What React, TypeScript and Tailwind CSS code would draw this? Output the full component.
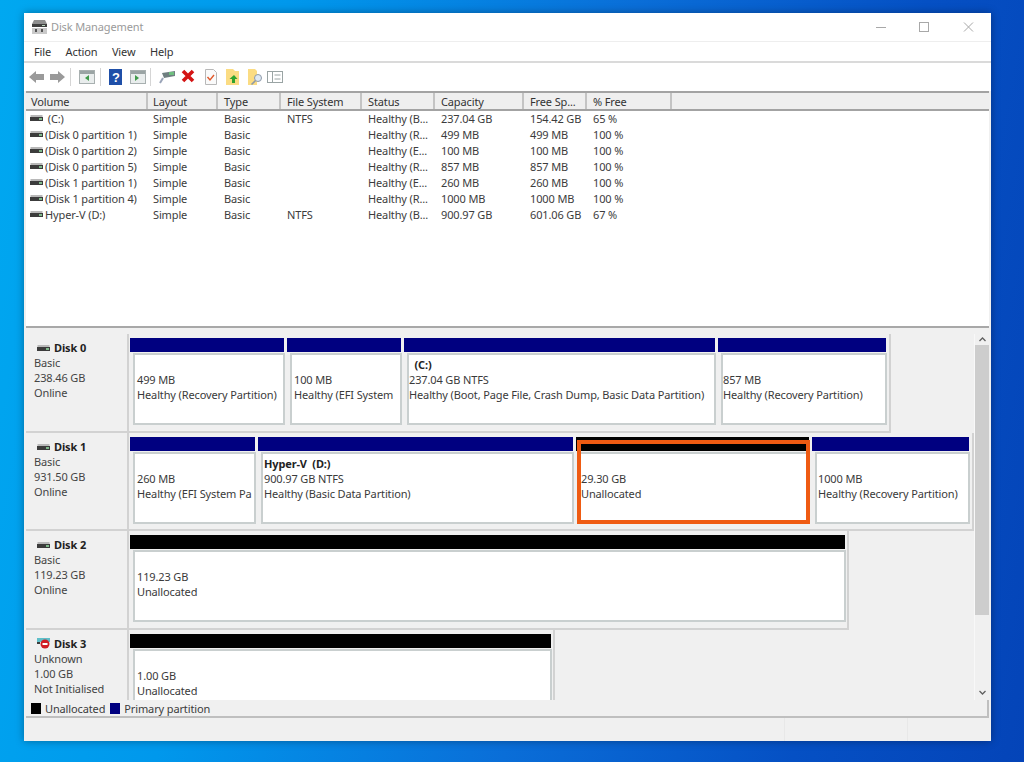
import React from "react";

const cols = ["w-[122px]", "w-[70px]", "w-[63px]", "w-[81px]", "w-[73px]", "w-[89px]", "w-[63px]", "w-[85px]"];
const heads = ["Volume", "Layout", "Type", "File System", "Status", "Capacity", "Free Sp...", "% Free"];
const rows = [
  [" (C:)", "Simple", "Basic", "NTFS", "Healthy (B...", "237.04 GB", "154.42 GB", "65 %"],
  ["(Disk 0 partition 1)", "Simple", "Basic", "", "Healthy (R...", "499 MB", "499 MB", "100 %"],
  ["(Disk 0 partition 2)", "Simple", "Basic", "", "Healthy (E...", "100 MB", "100 MB", "100 %"],
  ["(Disk 0 partition 5)", "Simple", "Basic", "", "Healthy (R...", "857 MB", "857 MB", "100 %"],
  ["(Disk 1 partition 1)", "Simple", "Basic", "", "Healthy (E...", "260 MB", "260 MB", "100 %"],
  ["(Disk 1 partition 4)", "Simple", "Basic", "", "Healthy (R...", "1000 MB", "1000 MB", "100 %"],
  ["Hyper-V (D:)", "Simple", "Basic", "NTFS", "Healthy (B...", "900.97 GB", "601.06 GB", "67 %"],
];

function Drive() {
  return (
    <svg width="13" height="8" viewBox="0 0 13 8" className="shrink-0">
      <rect x="0.5" y="1" width="12" height="2" fill="#b8b8b8" />
      <rect x="0" y="3" width="13" height="4" fill="#3c3c3c" />
      <rect x="9" y="4" width="3" height="2" fill="#7fb98a" />
    </svg>
  );
}

function Partition({ w, color = "bg-[#000080]", lines, bold, pad = "pl-[2px]" }: { w: string; color?: string; lines: string[]; bold?: string; pad?: string }) {
  return (
    <div className={`${w} shrink-0 h-full flex flex-col pr-[3px]`}>
      <div className={`h-[14px] shrink-0 ${color}`} />
      <div className="h-[1px] shrink-0" />
      <div className={`ml-[3px] mr-[-1px] h-[72px] shrink-0 bg-white border-t-2 border-l-2 border-[#c9cfcf] border-r-2 border-b-2 ${pad} overflow-hidden whitespace-pre text-[#3a3a3a]`}>
        <div className="h-[15px] mt-[2px] leading-[15px] font-bold text-[#222]">{bold}</div>
        {lines.map((l) => (
          <div key={l} className="h-[15px] leading-[15px]">{l}</div>
        ))}
      </div>
    </div>
  );
}

function DiskRow({ h, name, info, frame, icon, children }: { h: string; name: string; info: string[]; frame: string; icon?: React.ReactNode; children: React.ReactNode }) {
  return (
    <div className={`${h} shrink-0 flex`}>
      <div className="w-[103px] shrink-0 border-b-2 border-r-2 border-[#d2d2d2] pl-[8px] pt-[6px] text-[#444] bg-[#f0f0f0]">
        <div className="h-[15px] flex items-center gap-[4px] pl-[3px] font-bold text-[#222]">
          {icon ?? <Drive />}
          <span>{name}</span>
        </div>
        {info.map((l) => (
          <div key={l} className="h-[15px] leading-[15px]">{l}</div>
        ))}
      </div>
      <div className={`${frame} shrink-0 h-full border-r-2 border-b-2 border-[#d2d2d2] pt-[4px] pl-[1px] flex`}>{children}</div>
    </div>
  );
}

function Toolbar() {
  return (
    <div className="h-[28px] shrink-0 bg-white flex items-center pl-[5px]">
      <svg width="270" height="22" viewBox="0 0 270 22">
        <path d="M0 11l7-6v3h8v6H7v3z" fill="#9a9a9a" />
        <path d="M36 11l-7-6v3h-8v6h8v3z" fill="#9a9a9a" />
        <line x1="41.5" y1="2" x2="41.5" y2="20" stroke="#d5d5d5" />
        <rect x="50.5" y="4.5" width="15" height="13" fill="#e9eded" stroke="#a8b0b0" />
        <rect x="51" y="5" width="14" height="3" fill="#9aa4a4" />
        <path d="M60 9l-4 3 4 3z" fill="#3f9a4a" />
        <line x1="71.5" y1="2" x2="71.5" y2="20" stroke="#d5d5d5" />
        <rect x="80" y="3" width="13" height="16" fill="#1f4fa8" />
        <text x="83" y="16" fontSize="13" fontWeight="700" fill="#fff" fontFamily="Liberation Sans, sans-serif">?</text>
        <rect x="101.5" y="4.5" width="15" height="13" fill="#e9eded" stroke="#a8b0b0" />
        <rect x="102" y="5" width="14" height="3" fill="#9aa4a4" />
        <path d="M106 9l4 3-4 3z" fill="#3f9a4a" />
        <line x1="121.5" y1="2" x2="121.5" y2="20" stroke="#d5d5d5" />
        <path d="M133 7l13-2v5l-11 2z" fill="#6f7f80" />
        <rect x="140" y="6" width="5" height="3" fill="#6fbf7f" />
        <path d="M134 12l-3 5" stroke="#9aa4b8" strokeWidth="2" />
        <path d="M154 5l10 10M164 5l-10 10" stroke="#d41414" strokeWidth="3.6" />
        <path d="M176.5 3.5h8l3 3v12h-11z" fill="#fafafa" stroke="#b8b8b8" />
        <path d="M178.5 11l2.5 3 4-5" stroke="#e0582a" strokeWidth="1.4" fill="none" />
        <path d="M197 3h7l2 2h4v14h-13z" fill="#fbdc83" />
        <path d="M205 9l3.5 4H206v4h-3v-4h-2.500z" fill="#2fa32f" />
        <path d="M219 3h7l2 2v14h-9z" fill="#fbdc83" />
        <circle cx="229" cy="12" r="3.500" fill="#dfe9f5" stroke="#8e9aa8" />
        <path d="M226.500 14.500l-4 4" stroke="#8e9aa8" strokeWidth="1.600" />
        <rect x="238.500" y="5.500" width="15" height="11" fill="#fff" stroke="#9aa4a4" />
        <line x1="243.500" y1="6" x2="243.500" y2="16" stroke="#9aa4a4" />
        <path d="M245.500 9h6M245.500 13h6" stroke="#9aa4a4" />
      </svg>
    </div>
  );
}

export default function App() {
  return (
    <div className="w-[1024px] h-[762px] overflow-hidden pt-[13px] pl-[24px] bg-[linear-gradient(100deg,#00a8f0_0%,#0098ec_25%,#0a6ed8_55%,#0550c4_80%,#0444b8_100%)] font-['Noto_Sans',sans-serif] text-[11px] tracking-[-0.13px] leading-[15px]">
      <div className="w-[967px] h-[728px] bg-[#f0f0f0] flex flex-col shadow-[0_0_8px_rgba(0,0,0,0.35)]">
        {/* title */}
        <div className="h-[29px] shrink-0 bg-white flex items-center pl-[7px] text-[#9a9a9a] border-b border-[#eeeeee]">
          <svg width="17" height="16" viewBox="0 0 17 16" className="mr-[3px]">
            <path d="M3 1h11l2 4H1z" fill="#8f8f8f" />
            <rect x="1" y="5" width="15" height="3" fill="#3f3f3f" />
            <rect x="11" y="6" width="3" height="1" fill="#bcd8c0" />
            <rect x="1" y="9" width="15" height="6" fill="#c9c9c9" />
            <rect x="4" y="10" width="2" height="3" fill="#555" />
            <rect x="10" y="10" width="2" height="3" fill="#555" />
          </svg>
          <span className="mb-[1px]">Disk Management</span>
          <div className="ml-auto flex items-center">
            <svg width="100" height="12" viewBox="0 0 100 12" className="mr-[15px]">
              <line x1="0" y1="6.500" x2="10" y2="6.500" stroke="#a8a8a8" />
              <rect x="43.500" y="1.500" width="9" height="9" fill="none" stroke="#a8a8a8" />
              <path d="M88 1.500l9 9M97 1.500l-9 9" stroke="#a8a8a8" />
            </svg>
          </div>
        </div>
        {/* menu */}
        <div className="h-[21px] shrink-0 bg-white border-b-2 border-[#dadada] flex items-center pl-[10px] gap-[14.5px] text-[#333]">
          <span>File</span>
          <span>Action</span>
          <span>View</span>
          <span>Help</span>
        </div>
        <Toolbar />
        {/* list */}
        <div className="h-[237px] shrink-0 mx-[2px] bg-white border-b-2 border-[#a8a8a8] flex flex-col">
          <div className="h-[20px] shrink-0 bg-[#efefef] border-t-2 border-b-2 border-[#a3a3a3] flex items-center text-[#333]">
            {heads.map((h, i) => (
              <div key={h} className={`${cols[i]} h-full ${i < 2 ? "pl-[5px]" : "pl-[6px]"} border-r-2 border-[#c4c4c4] flex items-center whitespace-nowrap`}>{h}</div>
            ))}
          </div>
          <div className="flex flex-col text-[#3c3c3c] -mt-[1px]">
            {rows.map((r) => (
              <div key={r[0]} className="h-[16px] flex items-center whitespace-pre">
                {r.map((c, i) => (
                  <div key={i} className={`${cols[i]} ${i === 0 ? "flex items-center gap-[2px] pl-[4px]" : i === 1 ? "pl-[5px]" : "pl-[6px]"} overflow-hidden`}>
                    {i === 0 && <Drive />}
                    {c}
                  </div>
                ))}
              </div>
            ))}
          </div>
        </div>
        {/* disks */}
        <div className="h-[372px] shrink-0 mx-[2px] pt-[6px] flex">
          <div className="relative w-[948px] shrink-0 flex flex-col overflow-hidden">
            <DiskRow h="h-[99px]" name="Disk 0" info={["Basic", "238.46 GB", "Online"]} frame="w-[762px]">
              <Partition w="w-[157px]" lines={["499 MB", "Healthy (Recovery Partition)"]} />
              <Partition w="w-[117px]" lines={["100 MB", "Healthy (EFI System"]} />
              <Partition w="w-[314px]" pad="pl-0" bold="  (C:)" lines={["237.04 GB NTFS", "Healthy (Boot, Page File, Crash Dump, Basic Data Partition)"]} />
              <Partition w="w-[171px]" pad="pl-0" lines={["857 MB", "Healthy (Recovery Partition)"]} />
            </DiskRow>
            <DiskRow h="h-[98px]" name="Disk 1" info={["Basic", "931.50 GB", "Online"]} frame="w-[845px]">
              <Partition w="w-[128px]" lines={["260 MB", "Healthy (EFI System Pa"]} />
              <Partition w="w-[318px]" pad="pl-[1px]" bold="Hyper-V  (D:)" lines={["900.97 GB NTFS", "Healthy (Basic Data Partition)"]} />
              <Partition w="w-[236px]" color="bg-black" pad="pl-0" lines={["29.30 GB", "Unallocated"]} />
              <Partition w="w-[160px]" pad="pl-[1px]" lines={["1000 MB", "Healthy (Recovery Partition)"]} />
            </DiskRow>
            <DiskRow h="h-[99px]" name="Disk 2" info={["Basic", "119.23 GB", "Online"]} frame="w-[720px]">
              <Partition w="w-[718px]" color="bg-black" lines={["119.23 GB", "Unallocated"]} />
            </DiskRow>
            <DiskRow
              h="h-[99px]"
              name="Disk 3"
              info={["Unknown", "1.00 GB", "Not Initialised"]}
              frame="w-[426px]"
              icon={
                <svg width="13" height="11" viewBox="0 0 13 11" className="shrink-0">
                  <rect x="0" y="0" width="13" height="4" fill="#5fbfc9" />
                  <circle cx="8" cy="6" r="4.500" fill="#d01c24" />
                  <rect x="5.500" y="5" width="5" height="2" fill="#fff" />
                  <rect x="0" y="4" width="3" height="2" fill="#3c3c3c" />
                </svg>
              }
            >
              <Partition w="w-[424px]" color="bg-black" lines={["1.00 GB", "Unallocated"]} />
            </DiskRow>
            <div className="absolute left-[551px] top-[106px] w-[233px] h-[84px] border-4 border-[#ef5b12]" />
          </div>
          <div className="w-[15px] shrink-0 flex flex-col items-center border-l border-[#f8f8f8]">
            <svg width="9" height="11" viewBox="0 0 9 11" className="shrink-0">
              <path d="M1.500 7l3-3 3 3" fill="none" stroke="#606060" strokeWidth="1.300" />
            </svg>
            <div className="w-full h-[270px] bg-[#cdcdcd] shrink-0" />
            <div className="flex-1" />
            <svg width="9" height="13" viewBox="0 0 9 13" className="shrink-0">
              <path d="M1.500 4l3 3 3-3" fill="none" stroke="#606060" strokeWidth="1.300" />
            </svg>
          </div>
        </div>
        {/* legend */}
        <div className="h-[18px] shrink-0 mx-[2px] bg-[#f0f0f0] border-b-2 border-r-2 border-[#bfbfbf] flex items-center pl-[5px] text-[#3c3c3c]">
          <div className="w-[10px] h-[11px] bg-black mr-[4px]" />
          <span className="mr-[5px]">Unallocated</span>
          <div className="w-[10px] h-[11px] bg-[#000080] mr-[4px]" />
          <span>Primary partition</span>
        </div>
        {/* status */}
        <div className="flex-1 flex">
          <div className="w-[761px] border-r border-[#e8e8e8]" />
          <div className="w-[123px] border-r border-[#e8e8e8]" />
        </div>
      </div>
    </div>
  );
}
